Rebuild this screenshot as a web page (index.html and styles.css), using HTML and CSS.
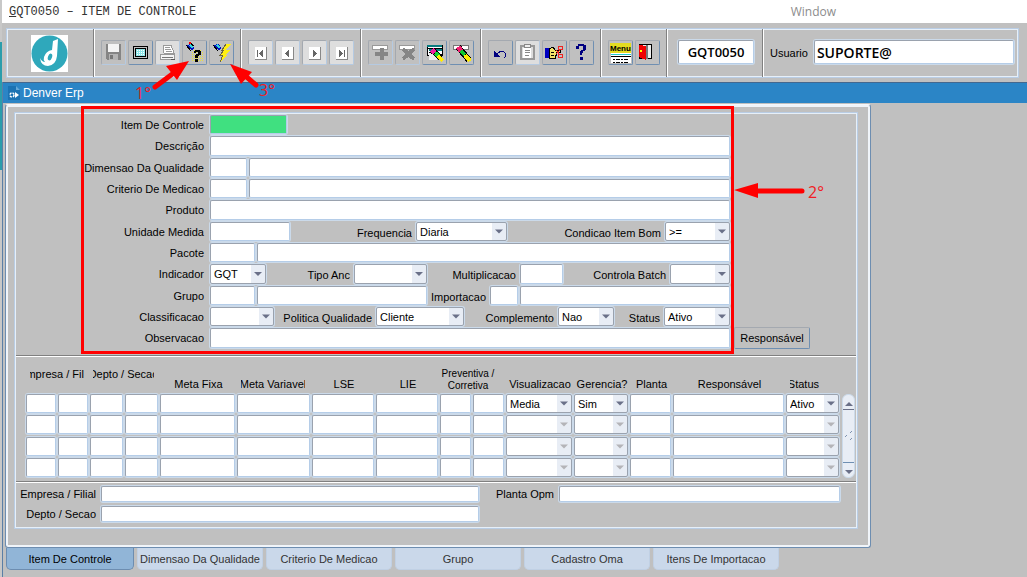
FILE: index.html
```html
<!DOCTYPE html>
<html lang="pt-br">
<head>
    <meta charset="UTF-8">
    <meta name="viewport" content="width=device-width, initial-scale=1.0">
    <title>GQT0050 - ITEM DE CONTROLE</title>
    <link rel="stylesheet" href="styles.css">
</head>
<body>

<div class="edge"></div>

<div class="window">
    <!-- Barra de título -->
    <header class="titlebar">
        <span class="title"><u>G</u>QT0050 – ITEM DE CONTROLE</span>
        <span class="menu-window">Window</span>
    </header>

    <!-- Barra de ferramentas -->
    <div class="toolbar">
        <div class="logo">
            <svg width="37" height="37" viewBox="0 0 37 37">
                <rect width="37" height="37" fill="#fff"/>
                <circle cx="18.5" cy="18.5" r="18" fill="#2fa8bb"/>
                <path d="M22 6l5-2-1 17q-1 9-9 10-7 0-8-8 2 4 5 4-2-2-1-5 2-6 8-7z" fill="#fff"/>
                <ellipse cx="19" cy="22" rx="2" ry="3.500" fill="#2fa8bb" transform="rotate(20 19 22)"/>
            </svg>
        </div>
        <div class="group">
            <button class="tool off" aria-label="Salvar"><svg viewBox="0 0 23 23">
                <path d="M4 3h15v16H5l-1-1z" fill="#858585"/><path d="M6 3h11v8H6z" fill="#f4f4f4"/><path d="M7 13h9v6H7z" fill="#b4b4b4"/><path d="M8 14h3v4H8z" fill="#777"/></svg></button>
            <button class="tool" aria-label="Tela"><svg viewBox="0 0 23 23">
                <rect x="4.500" y="5.500" width="14" height="12" rx="1" fill="#c0c0c0" stroke="#000"/><rect x="6.500" y="7.500" width="10" height="8" fill="#8fe6e8" stroke="#000"/><path d="M8 9.500h8M8 11.500h8M8 13.500h8" stroke="#fff" stroke-dasharray="1 1"/></svg></button>
            <button class="tool off light" aria-label="Imprimir"><svg viewBox="0 0 23 23">
                <path d="M7 4h8l3 8H8z" fill="#fff" stroke="#999"/><path d="M9 6h5M9 8h6M10 10h6" stroke="#999"/><path d="M4.500 13.500h14v5h-14z" fill="#f4f4f4" stroke="#999"/><path d="M6 16h11" stroke="#777"/><path d="M15 18h4" stroke="#555"/></svg></button>
            <button class="tool" aria-label="Entrar consulta"><svg viewBox="0 0 23 23">
                <path d="M9.500 11v10M11.500 9v12M13.500 9v12M15.500 9v12M17.500 9v12M19.500 11v10" stroke="#e8e23c" stroke-dasharray="1 1"/><path d="M3 4l5-1 3 4-1 2-4-1z" fill="#0010c0"/><path d="M3 4l5 6M7 2l4 3" stroke="#000" fill="none"/><path d="M7 4l3 3" stroke="#35d5dc" stroke-width="2"/><path d="M6 2h2" stroke="#f00" stroke-width="2"/><path d="M12 9h5v1h1v4h-2v1h-1v2h-3v-3h1v-1h2v-2h-2v1h-2v-2h1z" fill="#000"/><path d="M12 18h3v3h-3z" fill="#000"/></svg></button>
            <button class="tool" aria-label="Executar consulta"><svg viewBox="0 0 23 23">
                <path d="M3 4l6-1 2 4-1 2-4-1z" fill="#0010c0"/><path d="M3 4l5 6" stroke="#000"/><path d="M7 4l3 3" stroke="#35d5dc" stroke-width="2"/><path d="M16 3h5l-5 6h4l-4 5h2l-8 7 3-7h-3l4-5h-2z" fill="#ffef12"/><path d="M16 3l-4 6h2l-4 5h3l-3 7" fill="none" stroke="#6a6440"/></svg></button>
        </div>
        <div class="group">
            <button class="tool off light" aria-label="Primeiro"><svg viewBox="0 0 23 23"><path d="M6 6h12v13H6z" fill="#fff"/><path d="M6 18.500h11.500V6" fill="none" stroke="#888"/><path d="M8 9h1v7H8zM14 9v7l-4-3.500z" fill="#666"/></svg></button>
            <button class="tool off light" aria-label="Anterior"><svg viewBox="0 0 23 23"><path d="M6 6h12v13H6z" fill="#fff"/><path d="M6 18.500h11.500V6" fill="none" stroke="#888"/><path d="M13 9v7l-4-3.500z" fill="#666"/></svg></button>
            <button class="tool off light" aria-label="Próximo"><svg viewBox="0 0 23 23"><path d="M6 6h12v13H6z" fill="#fff"/><path d="M6 18.500h11.500V6" fill="none" stroke="#888"/><path d="M10 9v7l4-3.500z" fill="#666"/></svg></button>
            <button class="tool off light" aria-label="Último"><svg viewBox="0 0 23 23"><path d="M6 6h12v13H6z" fill="#fff"/><path d="M6 18.500h11.500V6" fill="none" stroke="#888"/><path d="M9 9v7l4-3.500zM14 9h1v7h-1z" fill="#666"/></svg></button>
        </div>
        <div class="group">
            <button class="tool off" aria-label="Inserir"><svg viewBox="0 0 23 23"><rect x="3.500" y="4.500" width="15" height="4" fill="#fff" stroke="#999"/><path d="M11 7h4v4h4v4h-4v4h-4v-4H6v-4h5z" fill="#858585"/></svg></button>
            <button class="tool off" aria-label="Remover"><svg viewBox="0 0 23 23"><rect x="3.500" y="4.500" width="15" height="4" fill="#fff" stroke="#999"/><path d="M7 8l11 10M18 8L7 18" stroke="#858585" stroke-width="4"/></svg></button>
            <button class="tool" aria-label="Limpar bloco"><svg viewBox="0 0 23 23"><path d="M4 4h15v10H4z" fill="#fff" stroke="#000"/><path d="M4 5h15M6 9h13" stroke="#087c80" stroke-width="2"/><path d="M4 7h15M6 11h10" stroke="#000"/><path d="M6 12h8v7H6z" fill="#eee"/><path d="M9 9l9 8" stroke="#000" stroke-width="6"/><path d="M9 9l3 3" stroke="#f020a0" stroke-width="5"/><path d="M12 12l4 3" stroke="#10d830" stroke-width="4"/><path d="M15 15l5 5" stroke="#ffee00" stroke-width="4"/></svg></button>
            <button class="tool" aria-label="Limpar registro"><svg viewBox="0 0 23 23"><rect x="3.500" y="4.500" width="15" height="4" fill="#fff" stroke="#777"/><path d="M8 6l11 13" stroke="#000" stroke-width="6"/><path d="M8 6l3 4" stroke="#f02070" stroke-width="5"/><path d="M11 10l4 4" stroke="#10c830" stroke-width="4"/><path d="M15 14l5 6" stroke="#ffee00" stroke-width="4"/></svg></button>
        </div>
        <div class="group">
            <button class="tool" aria-label="Desfazer"><svg viewBox="0 0 23 23"><path d="M5 10v6h6z" fill="#000080"/><path d="M7 14q4-5 8-3 4 3 0 6" fill="none" stroke="#000080"/></svg></button>
            <button class="tool off light" aria-label="Colar"><svg viewBox="0 0 23 23"><path d="M4.500 4.500h13v13h-13z" fill="#ddd" stroke="#999" stroke-width="2"/><path d="M8 3h6v3H8z" fill="#eee" stroke="#888"/><path d="M7 7h8v10H7z" fill="#fff"/><path d="M8.500 9h5M8.500 11.500h5M8.500 14h4" stroke="#888"/></svg></button>
            <button class="tool" aria-label="Recortar"><svg viewBox="0 0 23 23"><path d="M2 7h4v10H2z" fill="#0000c0"/><path d="M6 8l4-2 2 3h5v2h-4v3h-1v3H6z" fill="#f2e36a" stroke="#000"/><path d="M8 11h3M8 14h3" stroke="#000"/><path d="M13 13l4-4M13 9l4 5" stroke="#e22"/><circle cx="17.500" cy="7" r="2" fill="none" stroke="#e22"/><circle cx="17.500" cy="15" r="2" fill="none" stroke="#e22"/></svg></button>
            <button class="tool" aria-label="Ajuda"><svg viewBox="0 0 23 23"><path d="M8 3h6v1h2v5h-1v1h-2v2h-1v2h-2v-4h1V9h2V5H9v3H6V5h2z" fill="#000080"/><path d="M10 16h3v3h-3z" fill="#000080"/></svg></button>
        </div>
        <div class="group">
            <button class="tool" aria-label="Menu"><svg viewBox="0 0 23 23"><rect x="1" y="2" width="21" height="10" fill="#e4dc20"/><text x="1" y="10" class="icon-text">Menu</text><rect x="2" y="12" width="20" height="10" fill="#fff"/><path d="M2 13h20" stroke="#20c8d0"/><path d="M2 15h20" stroke="#000"/><path d="M4 18h15M4 21h15" stroke="#000" stroke-dasharray="2 1 4 1"/></svg></button>
            <button class="tool" aria-label="Sair"><svg viewBox="0 0 23 23"><path d="M3.500 3.500h12v14h-12z" fill="#eee" stroke="#000"/><path d="M3 4l7 1v14l-7-3z" fill="#f00000"/><path d="M11 4v14" stroke="#777" stroke-width="2"/><circle cx="5" cy="10" r="1" fill="#ff0"/></svg></button>
        </div>
        <div class="group code">
            <input class="big" type="text" value="GQT0050" aria-label="Programa">
        </div>
        <div class="group user">
            <label for="usuario">Usuario</label>
            <input class="big" type="text" id="usuario" value="SUPORTE@">
        </div>
    </div>

    <div class="mdi">
        <div class="mdi-title">
            <svg width="12" height="14" viewBox="0 0 12 14"><path d="M0 0h8l4 4v10H0z" fill="#1c73b3"/><path d="M8 0v4h4" fill="#65a9d8"/><circle cx="4" cy="9" r="2" fill="none" stroke="#fff" stroke-width="1.500" stroke-dasharray="2 1"/><path d="M7 6l4 3-4 3z" fill="#fff"/></svg>
            Denver Erp
        </div>

        <main class="panel">
            <div class="frame">
                <!-- Cadastro -->
                <form class="form">
                    <div class="row"><label for="item">Item De Controle</label><div class="fields f-item"><input type="text" id="item" class="required"></div></div>
                    <div class="row"><label for="descricao">Descrição</label><div class="fields"><input type="text" id="descricao"></div></div>
                    <div class="row"><label for="dimensao">Dimensao Da Qualidade</label><div class="fields f-code"><input type="text" id="dimensao"><input type="text" aria-label="Nome da dimensao"></div></div>
                    <div class="row"><label for="criterio">Criterio De Medicao</label><div class="fields f-code"><input type="text" id="criterio"><input type="text" aria-label="Nome do criterio"></div></div>
                    <div class="row"><label for="produto">Produto</label><div class="fields"><input type="text" id="produto"></div></div>
                    <div class="row"><label for="unidade">Unidade Medida</label><div class="fields f-unidade">
                        <input type="text" id="unidade">
                        <label for="frequencia">Frequencia</label><select id="frequencia"><option>Diaria</option></select>
                        <label for="condicao">Condicao Item Bom</label><select id="condicao"><option>&gt;=</option></select>
                    </div></div>
                    <div class="row"><label for="pacote">Pacote</label><div class="fields f-pacote"><input type="text" id="pacote"><input type="text" aria-label="Nome do pacote"></div></div>
                    <div class="row"><label for="indicador">Indicador</label><div class="fields f-indicador">
                        <select id="indicador"><option>GQT</option></select>
                        <label for="tipo">Tipo Anc</label><select id="tipo"><option></option></select>
                        <label for="mult">Multiplicacao</label><input type="text" id="mult">
                        <label for="batch">Controla Batch</label><select id="batch"><option></option></select>
                    </div></div>
                    <div class="row"><label for="grupo">Grupo</label><div class="fields f-grupo">
                        <input type="text" id="grupo"><input type="text" aria-label="Nome do grupo">
                        <label for="importacao">Importacao</label><input type="text" id="importacao"><input type="text" aria-label="Nome da importacao">
                    </div></div>
                    <div class="row"><label for="classificacao">Classificacao</label><div class="fields f-class">
                        <select id="classificacao"><option></option></select>
                        <label for="politica">Politica Qualidade</label><select id="politica"><option>Cliente</option></select>
                        <label for="complemento">Complemento</label><select id="complemento"><option>Nao</option></select>
                        <label for="status">Status</label><select id="status"><option>Ativo</option></select>
                    </div></div>
                    <div class="row"><label for="obs">Observacao</label><div class="fields"><input type="text" id="obs"></div><button type="button" class="resp">Responsável</button></div>
                </form>

                <!-- Metas por empresa -->
                <div class="metas">
                    <table>
                        <colgroup>
                            <col class="w32"><col class="w32"><col class="w35"><col class="w35"><col class="w77"><col class="w75"><col class="w64"><col class="w64"><col class="w33"><col class="w33"><col class="w68"><col class="w56"><col class="w43"><col><col class="w55">
                        </colgroup>
                        <thead>
                            <tr>
                                <th colspan="2" class="up"><span class="clip c-emp">Empresa / Filial</span></th>
                                <th colspan="2" class="up"><span class="clip c-dep">Depto / Secao</span></th>
                                <th>Meta Fixa</th>
                                <th><span class="clip c-var">Meta Variavel</span></th>
                                <th>LSE</th>
                                <th>LIE</th>
                                <th colspan="2" class="small">Preventiva /<br>Corretiva</th>
                                <th>Visualizacao</th>
                                <th>Gerencia?</th>
                                <th>Planta</th>
                                <th>Responsável</th>
                                <th><span class="clip c-sta">Status</span></th>
                            </tr>
                        </thead>
                        <tbody id="linhas"></tbody>
                    </table>
                    <div class="scroll">
                        <button type="button" aria-label="Subir"><svg width="8" height="4" viewBox="0 0 8 4"><path d="M4 0l4 4H0z" fill="#6a7088"/></svg></button>
                        <div class="thumb"><svg width="8" height="10" viewBox="0 0 8 10"><path d="M0 6l2-2M5 2l2-2M5 9l2-2" stroke="#7f93b0"/></svg></div>
                        <button type="button" aria-label="Descer"><svg width="8" height="4" viewBox="0 0 8 4"><path d="M0 0h8L4 4z" fill="#6a7088"/></svg></button>
                    </div>
                </div>

                <div class="footer">
                    <label for="empresa">Empresa / Filial</label><input type="text" id="empresa">
                    <label for="planta">Planta Opm</label><input type="text" id="planta">
                    <label for="depto">Depto / Secao</label><input type="text" id="depto">
                </div>
            </div>
        </main>

        <!-- Abas -->
        <nav class="tabs">
            <button class="tab active">Item De Controle</button>
            <button class="tab">Dimensao Da Qualidade</button>
            <button class="tab">Criterio De Medicao</button>
            <button class="tab">Grupo</button>
            <button class="tab">Cadastro Oma</button>
            <button class="tab">Itens De Importacao</button>
        </nav>
    </div>
</div>

<!-- Passos do manual sobre a tela -->
<svg class="steps" width="1027" height="577" viewBox="0 0 1027 577">
    <rect x="82.500" y="107.500" width="650" height="245" fill="none" stroke="#f00" stroke-width="3"/>
    <g stroke="#f00" stroke-width="5" stroke-linecap="round">
        <path d="M155 87l20-15"/>
        <path d="M256 85l-14-12"/>
        <path d="M802 191h-46"/>
    </g>
    <path d="M189 61l-12 19-11-14zM230 64l22 8-11 12zM734 190l24-7v15z" fill="#f00"/>
    <text x="135" y="99">1°</text>
    <text x="259" y="96">3°</text>
    <text x="808" y="198">2°</text>
</svg>

<script>
    // Monta as linhas da tabela de metas
    const textos = { 10: 'Media', 11: 'Sim', 14: 'Ativo' };
    const corpo = document.getElementById('linhas');

    for (let i = 0; i < 4; i++) {
        const linha = document.createElement('tr');
        for (let c = 0; c < 15; c++) {
            const celula = document.createElement('td');
            let campo;
            if (textos[c]) {
                campo = document.createElement('select');
                campo.add(new Option(i === 0 ? textos[c] : ''));
                campo.disabled = i > 0;
            } else {
                campo = document.createElement('input');
                campo.type = 'text';
            }
            campo.setAttribute('aria-label', `Linha ${i + 1}, coluna ${c + 1}`);
            celula.appendChild(campo);
            linha.appendChild(celula);
        }
        corpo.appendChild(linha);
    }
</script>

</body>
</html>
```
FILE: styles.css
```css
* {
    box-sizing: border-box;
}
body {
    display: flex;
    min-height: 100vh;
    margin: 0;
    position: relative;
    overflow: hidden;
    background-color: #c0c0c0;
    font-family: "Liberation Sans", Arial, sans-serif;
    font-size: 11px;
    color: #000;
}
button, input, select {
    font: inherit;
    color: inherit;
    margin: 0;
}
.edge {
    width: 2px;
    background: linear-gradient(#c8c8c8 42px, #2b9dac 42px, #2b9dac 170px, #c8c8c8 170px);
}
.window {
    flex: 1;
    min-width: 0;
    display: flex;
    flex-direction: column;
}

/* Barra de título */
.titlebar {
    display: flex;
    align-items: center;
    height: 23px;
    background-color: white;
}
.title {
    flex: 1;
    padding-left: 7px;
    font-family: "Liberation Mono", "Courier New", monospace;
    font-size: 12px;
    color: #333;
}
.menu-window {
    padding-right: 191px;
    font-family: "Open Sans", sans-serif;
    font-size: 12px;
    color: #8c8c8c;
}

/* Barra de ferramentas */
.toolbar {
    display: flex;
    height: 50px;
    margin: 5px 8px 4px 4px;
    border: 1px solid #b9cde5;
    box-shadow: inset 0 0 0 1px #e6eff8;
}
.logo {
    display: flex;
    align-items: center;
    width: 86px;
    padding-left: 24px;
}
.group {
    display: flex;
    align-items: center;
    gap: 2px;
    padding: 0 6px 2px;
    border-left: 1px solid #808080;
    box-shadow: inset 1px 0 0 white;
}
.group .tool:first-child {
    margin-left: 1px;
}
.tool {
    width: 25px;
    height: 25px;
    padding: 0;
    border: 1px solid #a4a9b0;
    border-right-color: #6f8fb2;
    border-bottom-color: #6f8fb2;
    border-radius: 2px;
    background-color: #c0c0c0;
}
.tool.off {
    border-right-color: #b5cae2;
    border-bottom-color: #b5cae2;
}
.tool.light {
    background-color: #dedede;
}
.tool svg {
    display: block;
    width: 23px;
    height: 23px;
    shape-rendering: crispEdges;
}
.icon-text {
    font-size: 8px;
    font-weight: bold;
}
.code {
    padding: 0 8px 2px 11px;
}
.user {
    flex: 1;
    gap: 6px;
    padding: 0 4px 2px 7px;
}
.user label {
    padding-top: 2px;
}
.big {
    height: 24px;
    font-family: "Open Sans", sans-serif;
    font-size: 14px;
    font-weight: 600;
}
.code .big {
    width: 76px;
    padding: 0;
    font-size: 13px;
    text-align: center;
}
.user .big {
    flex: 1;
    min-width: 0;
    padding: 0 2px;
}

/* Campos */
input, select {
    width: 100%;
    min-width: 0;
    padding: 0 3px;
    background-color: white;
    border: 1px solid #9aa2ae;
    border-right-color: #b5cde8;
    border-bottom-color: #b5cde8;
    border-radius: 2px;
    box-shadow: 0 0 0 1px #cbdaea;
    outline: none;
}
select {
    appearance: none;
    border-color: #9aa2ae;
    background: url("data:image/svg+xml,%3Csvg xmlns='http://www.w3.org/2000/svg' width='14' height='20'%3E%3Crect width='14' height='20' fill='%23e8edf5'/%3E%3Cpath d='M3 8h8l-4 4z' fill='%236a7088'/%3E%3C/svg%3E") no-repeat right center white;
}
select:disabled {
    opacity: 1;
    background-image: url("data:image/svg+xml,%3Csvg xmlns='http://www.w3.org/2000/svg' width='14' height='20'%3E%3Crect width='14' height='20' fill='%23e8edf5'/%3E%3Cpath d='M3 8h8l-4 4z' fill='%23b4b4b8'/%3E%3C/svg%3E");
}
.required {
    background-color: #40e080;
}
label {
    white-space: nowrap;
}

/* Janela interna */
.mdi {
    flex: 1;
    border-left: 1px solid #5b7fa6;
}
.mdi-title {
    display: flex;
    align-items: center;
    gap: 3px;
    height: 21px;
    padding-left: 5px;
    border-top: 1px solid #44688f;
    background-color: #2b85c6;
    color: white;
    font-size: 12px;
}
.panel {
    max-width: 866px;
    margin: 1px 0 0 2px;
    padding: 6px 12px 18px 6px;
    border: 1px solid #6d8db0;
    border-top-color: #f4f7fb;
    border-radius: 3px;
    box-shadow: inset 0 0 0 2px #f0f4f9;
}
.frame {
    border: 1px solid #b9cde5;
    box-shadow: inset 0 0 0 1px #e6eff8;
    margin: 1px 0 0 2px;
    padding: 1px;
}
.form {
    padding-bottom: 6px;
    border-bottom: 1px solid #808080;
    box-shadow: 0 1px 0 white;
}
.row {
    display: grid;
    grid-template-columns: 194px 1fr 126px;
    height: 21px;
}
.row:nth-child(3n+2) {
    height: 22px;
}
.row label {
    align-self: center;
    padding: 0 6px 0 0;
    text-align: right;
}
.fields {
    display: grid;
    column-gap: 2px;
    padding: 1px 0;
}
.row .fields label {
    padding: 2px 2px 0 0;
}
.f-item {
    grid-template-columns: 77px;
}
.f-code {
    grid-template-columns: 37px 1fr;
}
.f-unidade {
    grid-template-columns: 80px 122px 91px 1fr 65px;
}
.f-pacote {
    grid-template-columns: 45px 1fr;
}
.f-indicador {
    grid-template-columns: 56px 84px 73px 89px 43px 1fr 60px;
}
.f-grupo {
    grid-template-columns: 45px 170px 1fr 28px 210px;
}
.f-class {
    grid-template-columns: 64px 98px 88px 90px 56px 1fr 66px;
}
.resp {
    width: 76px;
    margin-left: 4px;
    padding: 0;
    border: 1px solid #a4a9b0;
    border-right-color: #6f8fb2;
    border-bottom-color: #6f8fb2;
    border-radius: 2px;
    background-color: #c0c0c0;
}

/* Tabela de metas */
.metas {
    display: flex;
    align-items: flex-end;
    gap: 1px;
    padding: 0 1px 3px 10px;
    border-bottom: 1px solid #808080;
    box-shadow: 0 1px 0 white;
}
table {
    flex: 1;
    table-layout: fixed;
    border-collapse: collapse;
}
.w32 { width: 32px; }
.w33 { width: 33px; }
.w35 { width: 35px; }
.w43 { width: 43px; }
.w55 { width: 55px; }
.w56 { width: 56px; }
.w64 { width: 64px; }
.w68 { width: 68px; }
.w75 { width: 75px; }
.w77 { width: 77px; }
th {
    height: 37px;
    padding: 0 0 3px;
    font-weight: normal;
    line-height: 12px;
    vertical-align: bottom;
    white-space: nowrap;
}
th.up {
    padding-bottom: 13px;
}
th.small {
    padding: 0 10px 1px 0;
    font-size: 10px;
}
.clip {
    display: flex;
    justify-content: center;
    overflow: hidden;
}
.c-emp {
    width: 54px;
    margin-left: 4px;
}
.c-dep {
    width: 61px;
    margin-left: 3px;
}
.c-var {
    width: 64px;
    margin-left: 4px;
}
.c-sta {
    width: 29px;
    margin-left: 4px;
    justify-content: flex-end;
}
td {
    height: 21px;
    padding: 1px 2px 1px 0;
}
tr:nth-child(3) td {
    height: 22px;
}
td input, td select {
    display: block;
    height: 19px;
}
.scroll {
    display: flex;
    flex-direction: column;
    width: 13px;
    height: 84px;
    background-color: #e8edf5;
    border: 1px solid #cbdaea;
    border-radius: 6px;
}
.scroll button {
    height: 14px;
    padding: 0;
    border: none;
    background: none;
    line-height: 8px;
}
.thumb {
    flex: 1;
    display: flex;
    align-items: center;
    justify-content: center;
    border-top: 1px solid #6a7088;
    border-bottom: 1px solid #6f8fb2;
}

/* Rodapé do quadro */
.footer {
    display: grid;
    grid-template-columns: 80px 378px 70px 281px;
    column-gap: 5px;
    row-gap: 4px;
    padding: 4px 0 5px;
    align-items: center;
}
.footer label {
    text-align: right;
}
.footer input {
    height: 16px;
}

/* Abas */
.tabs {
    display: flex;
    gap: 3px;
    margin-left: 3px;
}
.tab {
    width: 126px;
    height: 22px;
    padding: 0;
    border: 1px solid #c0d0e4;
    border-top: none;
    border-radius: 0 0 5px 5px;
    background-color: #cad8ea;
    color: #333;
}
.tab.active {
    width: 128px;
    border-color: #6d8db0;
    background-color: #91b5d7;
    color: #000;
}

/* Marcações dos passos */
.steps {
    position: absolute;
    top: 0;
    left: 0;
    pointer-events: none;
}
.steps text {
    font-family: "Open Sans", sans-serif;
    font-size: 16px;
    fill: #f01c24;
}
```
